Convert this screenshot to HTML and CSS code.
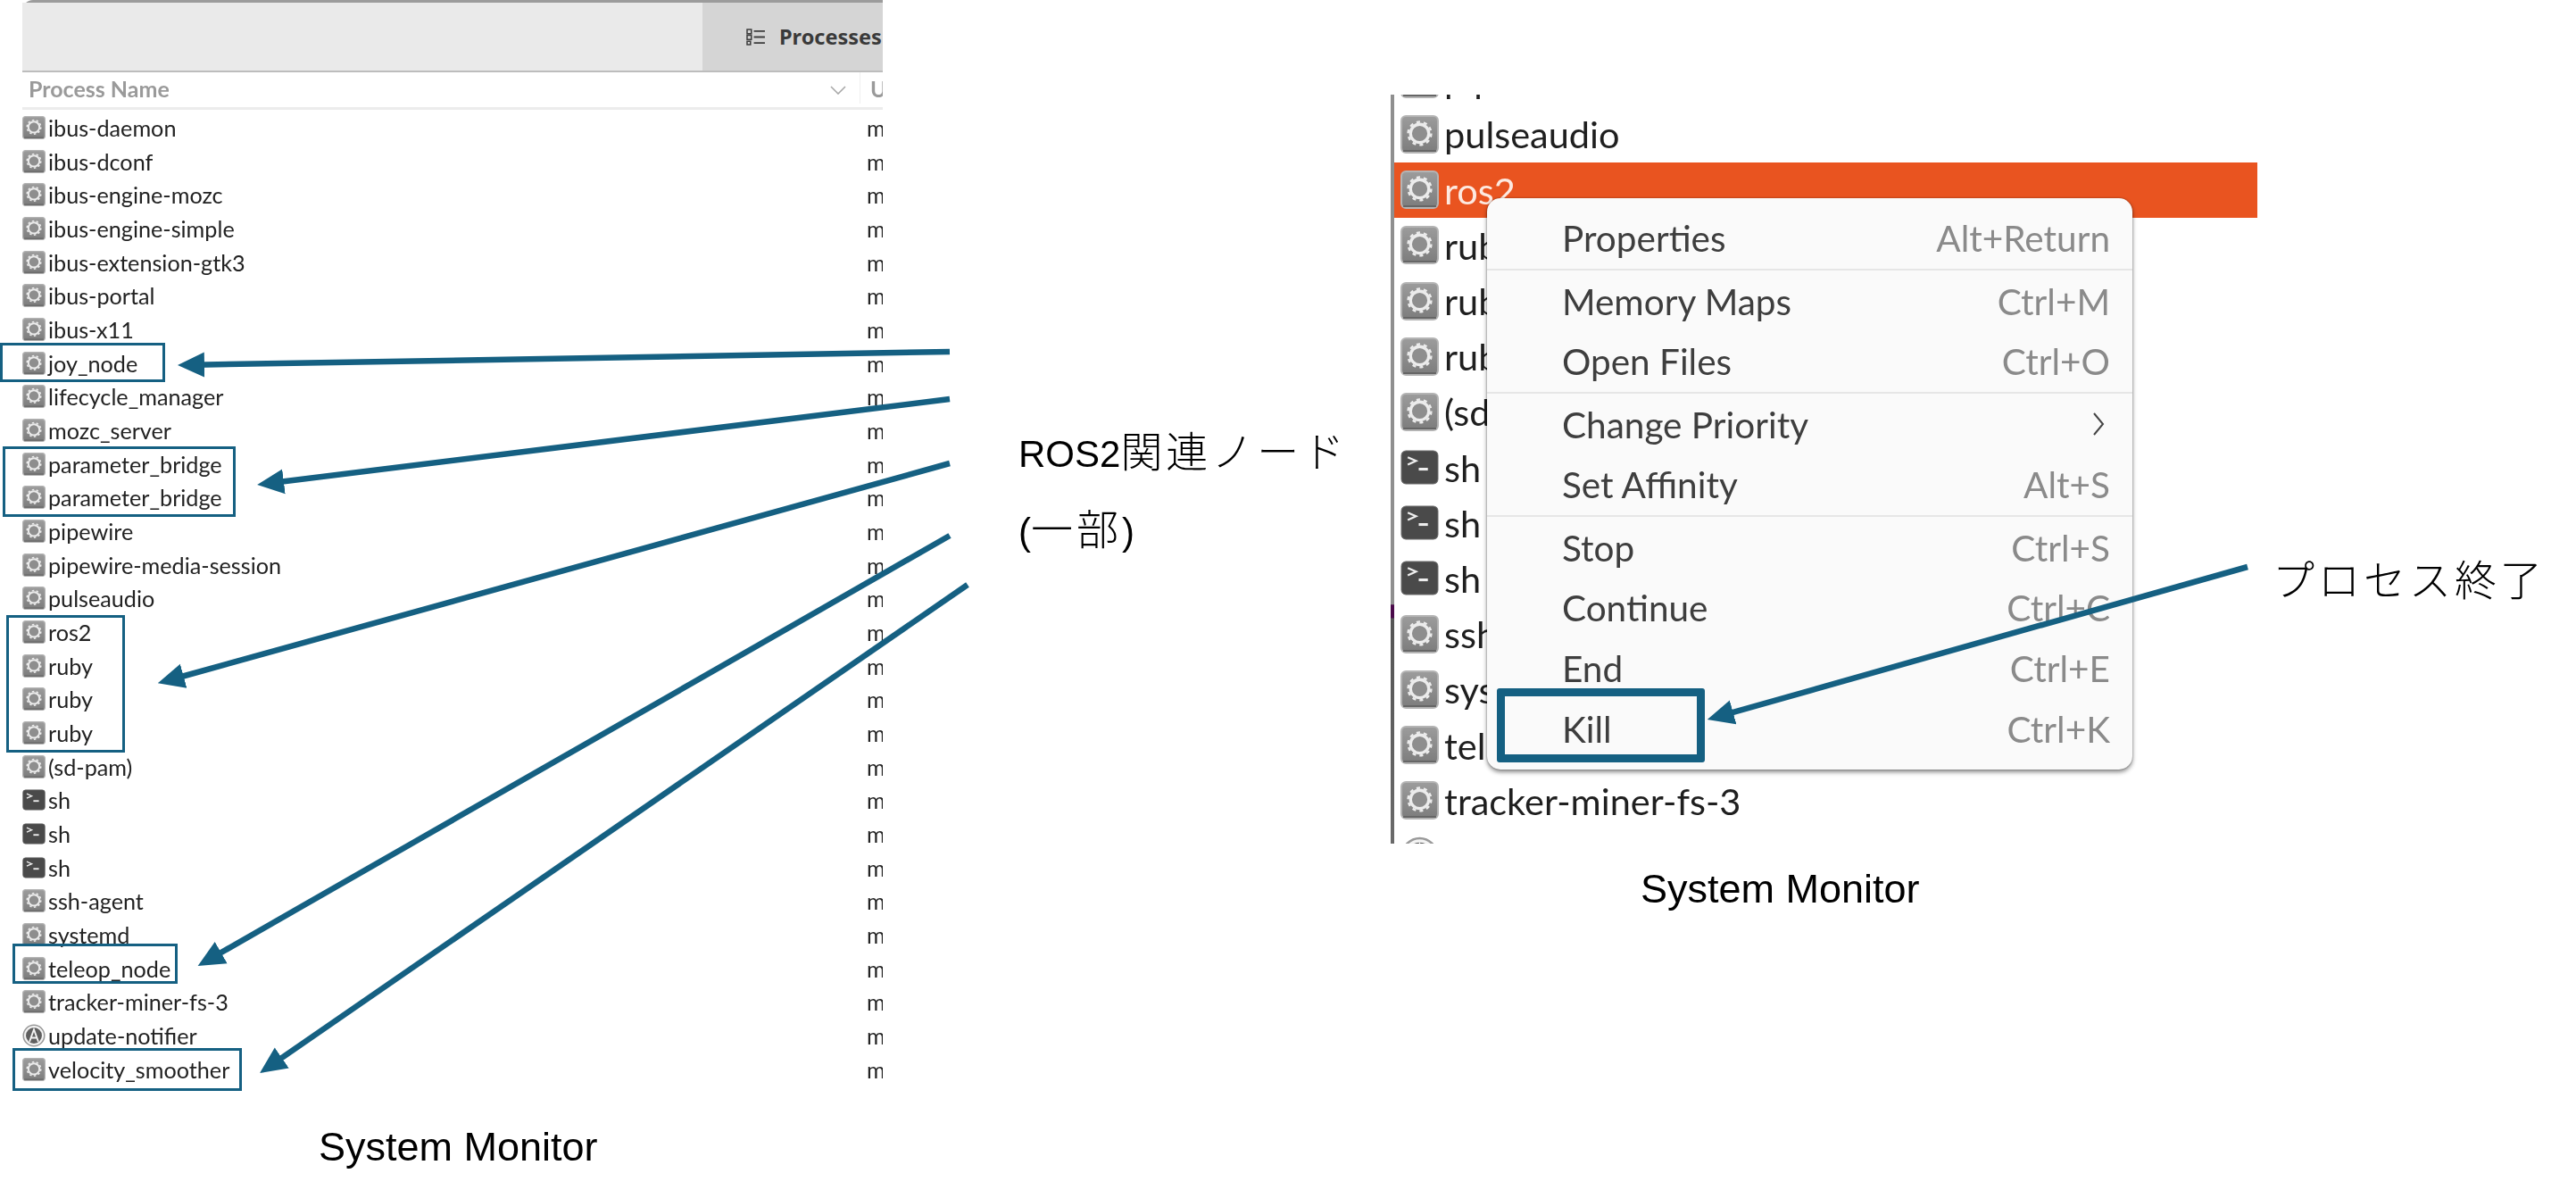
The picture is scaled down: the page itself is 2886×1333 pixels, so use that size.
FILE: index.html
```html
<!DOCTYPE html>
<html lang="ja">
<head>
<meta charset="utf-8">
<title>System Monitor</title>
<link rel="stylesheet" href="styles.css">
</head>
<body>
<svg class="defs" width="0" height="0" aria-hidden="true">
  <defs>
    <linearGradient id="gearBg" x1="0" y1="0" x2="0" y2="1">
      <stop offset="0" stop-color="#9c9c9c"/><stop offset="1" stop-color="#7c7c7c"/>
    </linearGradient>
    <symbol id="gear" viewBox="0 0 42 42">
      <rect x="1" y="1" width="40" height="40" rx="5" fill="url(#gearBg)" stroke="#b4b4b4" stroke-width="2"/>
      <path d="M3 39h36" stroke="#666" stroke-width="2"/>
      <circle cx="21" cy="20" r="10" fill="#8e8e8e" stroke="#ececec" stroke-width="3.2"/>
      <circle cx="21" cy="20" r="12.6" fill="none" stroke="#ececec" stroke-width="2.4" stroke-dasharray="4 3.92"/>
    </symbol>
    <symbol id="term" viewBox="0 0 42 42">
      <rect x="1" y="3" width="40" height="36" rx="5" fill="#4a4a4a" stroke="#6a6a6a" stroke-width="1"/>
      <path d="M8 10l9 4-9 4" fill="none" stroke="#eeeeee" stroke-width="2.2"/>
      <path d="M20 23h10" stroke="#eeeeee" stroke-width="3"/>
    </symbol>
    <symbol id="notifier" viewBox="0 0 42 42">
      <circle cx="21" cy="21" r="19" fill="#f4f4f4" stroke="#9a9a9a" stroke-width="2.5"/>
      <circle cx="21" cy="21" r="14.5" fill="#5f5f5f"/>
      <path d="M13 32L21 10l8 22M15.5 25h11" fill="none" stroke="#f4f4f4" stroke-width="3"/>
    </symbol>
    <marker id="head" markerUnits="userSpaceOnUse" markerWidth="30" markerHeight="30" refX="10" refY="15" orient="auto">
      <path d="M0 1L30 15 0 29z" class="head"/>
    </marker>
  </defs>
</svg>

<main class="slide">
  <section class="shot shot-list">
    <header class="tabs">
      <div class="tab-blank"></div>
      <div class="tab-active">
        <svg class="tab-icon" viewBox="0 0 22 20"><path d="M1 1h5v5H1zM1 8h5v5H1zM1 15h4v4H1z" fill="none" stroke="#3d3d3d" stroke-width="1.6"/><path d="M9 3h13M9 10h13M9 17h13" stroke="#3d3d3d" stroke-width="2"/></svg>
        <span>Processes</span>
      </div>
    </header>
    <div class="col-head">
      <span class="col-name">Process Name</span>
      <svg class="col-sort" viewBox="0 0 18 10"><path d="M1 1l8 8 8-8" fill="none" stroke="#a8a8a8" stroke-width="1.6"/></svg>
      <span class="col-user">U</span>
    </div>
    <ul class="rows">
      <li class="row"><svg class="ico"><use href="#gear"/></svg><span class="name">ibus-daemon</span><span class="user">m</span></li>
      <li class="row"><svg class="ico"><use href="#gear"/></svg><span class="name">ibus-dconf</span><span class="user">m</span></li>
      <li class="row"><svg class="ico"><use href="#gear"/></svg><span class="name">ibus-engine-mozc</span><span class="user">m</span></li>
      <li class="row"><svg class="ico"><use href="#gear"/></svg><span class="name">ibus-engine-simple</span><span class="user">m</span></li>
      <li class="row"><svg class="ico"><use href="#gear"/></svg><span class="name">ibus-extension-gtk3</span><span class="user">m</span></li>
      <li class="row"><svg class="ico"><use href="#gear"/></svg><span class="name">ibus-portal</span><span class="user">m</span></li>
      <li class="row"><svg class="ico"><use href="#gear"/></svg><span class="name">ibus-x11</span><span class="user">m</span></li>
      <li class="row"><svg class="ico"><use href="#gear"/></svg><span class="name">joy_node</span><span class="user">m</span></li>
      <li class="row"><svg class="ico"><use href="#gear"/></svg><span class="name">lifecycle_manager</span><span class="user">m</span></li>
      <li class="row"><svg class="ico"><use href="#gear"/></svg><span class="name">mozc_server</span><span class="user">m</span></li>
      <li class="row"><svg class="ico"><use href="#gear"/></svg><span class="name">parameter_bridge</span><span class="user">m</span></li>
      <li class="row"><svg class="ico"><use href="#gear"/></svg><span class="name">parameter_bridge</span><span class="user">m</span></li>
      <li class="row"><svg class="ico"><use href="#gear"/></svg><span class="name">pipewire</span><span class="user">m</span></li>
      <li class="row"><svg class="ico"><use href="#gear"/></svg><span class="name">pipewire-media-session</span><span class="user">m</span></li>
      <li class="row"><svg class="ico"><use href="#gear"/></svg><span class="name">pulseaudio</span><span class="user">m</span></li>
      <li class="row"><svg class="ico"><use href="#gear"/></svg><span class="name">ros2</span><span class="user">m</span></li>
      <li class="row"><svg class="ico"><use href="#gear"/></svg><span class="name">ruby</span><span class="user">m</span></li>
      <li class="row"><svg class="ico"><use href="#gear"/></svg><span class="name">ruby</span><span class="user">m</span></li>
      <li class="row"><svg class="ico"><use href="#gear"/></svg><span class="name">ruby</span><span class="user">m</span></li>
      <li class="row"><svg class="ico"><use href="#gear"/></svg><span class="name">(sd-pam)</span><span class="user">m</span></li>
      <li class="row"><svg class="ico"><use href="#term"/></svg><span class="name">sh</span><span class="user">m</span></li>
      <li class="row"><svg class="ico"><use href="#term"/></svg><span class="name">sh</span><span class="user">m</span></li>
      <li class="row"><svg class="ico"><use href="#term"/></svg><span class="name">sh</span><span class="user">m</span></li>
      <li class="row"><svg class="ico"><use href="#gear"/></svg><span class="name">ssh-agent</span><span class="user">m</span></li>
      <li class="row"><svg class="ico"><use href="#gear"/></svg><span class="name">systemd</span><span class="user">m</span></li>
      <li class="row"><svg class="ico"><use href="#gear"/></svg><span class="name">teleop_node</span><span class="user">m</span></li>
      <li class="row"><svg class="ico"><use href="#gear"/></svg><span class="name">tracker-miner-fs-3</span><span class="user">m</span></li>
      <li class="row"><svg class="ico"><use href="#notifier"/></svg><span class="name">update-notifier</span><span class="user">m</span></li>
      <li class="row"><svg class="ico"><use href="#gear"/></svg><span class="name">velocity_smoother</span><span class="user">m</span></li>
    </ul>
  </section>

  <section class="shot shot-menu">
    <ul class="big-rows">
      <li class="big-row"><svg class="big-ico"><use href="#gear"/></svg><span>pipewire-media-session</span></li>
      <li class="big-row"><svg class="big-ico"><use href="#gear"/></svg><span>pulseaudio</span></li>
      <li class="big-row is-selected"><svg class="big-ico"><use href="#gear"/></svg><span>ros2</span></li>
      <li class="big-row"><svg class="big-ico"><use href="#gear"/></svg><span>ruby</span></li>
      <li class="big-row"><svg class="big-ico"><use href="#gear"/></svg><span>ruby</span></li>
      <li class="big-row"><svg class="big-ico"><use href="#gear"/></svg><span>ruby</span></li>
      <li class="big-row"><svg class="big-ico"><use href="#gear"/></svg><span>(sd-pam)</span></li>
      <li class="big-row"><svg class="big-ico"><use href="#term"/></svg><span>sh</span></li>
      <li class="big-row"><svg class="big-ico"><use href="#term"/></svg><span>sh</span></li>
      <li class="big-row"><svg class="big-ico"><use href="#term"/></svg><span>sh</span></li>
      <li class="big-row"><svg class="big-ico"><use href="#gear"/></svg><span>ssh-agent</span></li>
      <li class="big-row"><svg class="big-ico"><use href="#gear"/></svg><span>systemd</span></li>
      <li class="big-row"><svg class="big-ico"><use href="#gear"/></svg><span>teleop_node</span></li>
      <li class="big-row"><svg class="big-ico"><use href="#gear"/></svg><span>tracker-miner-fs-3</span></li>
      <li class="big-row"><svg class="big-ico"><use href="#notifier"/></svg><span>update-notifier</span></li>
    </ul>
    <div class="menu">
      <div class="item"><span>Properties</span><span class="key">Alt+Return</span></div>
      <div class="sep"></div>
      <div class="item"><span>Memory Maps</span><span class="key">Ctrl+M</span></div>
      <div class="item"><span>Open Files</span><span class="key">Ctrl+O</span></div>
      <div class="sep"></div>
      <div class="item"><span>Change Priority</span><svg class="sub" viewBox="0 0 14 26"><path d="M2 1l10 12L2 25" fill="none" stroke="#444" stroke-width="2"/></svg></div>
      <div class="item"><span>Set Affinity</span><span class="key">Alt+S</span></div>
      <div class="sep"></div>
      <div class="item"><span>Stop</span><span class="key">Ctrl+S</span></div>
      <div class="item"><span>Continue</span><span class="key">Ctrl+C</span></div>
      <div class="item"><span>End</span><span class="key">Ctrl+E</span></div>
      <div class="item"><span>Kill</span><span class="key">Ctrl+K</span></div>
    </div>
  </section>

  <div class="box box-joy"></div>
  <div class="box box-param"></div>
  <div class="box box-ros"></div>
  <div class="box box-teleop"></div>
  <div class="box box-velocity"></div>
  <div class="box box-kill"></div>

  <svg class="arrows" viewBox="0 0 2886 1333">
    <line x1="1064" y1="394" x2="219" y2="408.7"/>
    <line x1="1064" y1="447" x2="308" y2="540.5"/>
    <line x1="1064" y1="519" x2="196" y2="760"/>
    <line x1="1064" y1="600" x2="239" y2="1072"/>
    <line x1="1084" y1="655" x2="307.5" y2="1190.6"/>
    <line x1="2518" y1="635" x2="1932" y2="800.6"/>
  </svg>

  <p class="note note-ros">ROS2<span class="jp">関連ノード</span></p>
  <p class="note note-part">(<span class="jp">一部</span>)</p>
  <p class="note note-kill"><span class="jp">プロセス終了</span></p>
  <p class="caption caption-left">System Monitor</p>
  <p class="caption caption-right">System Monitor</p>
</main>
</body>
</html>
```
FILE: styles.css
```css
* { box-sizing: border-box; }
html, body { margin: 0; padding: 0; background: #fff; }
.defs { position: absolute; }

.slide {
  position: relative;
  width: 2886px;
  height: 1333px;
  overflow: hidden;
  background: #fff;
  font-family: "Liberation Sans", "Noto Sans CJK JP", sans-serif;
}

/* left screenshot */
.shot { position: absolute; overflow: hidden; }
.shot-list {
  left: 25px; top: 0; width: 964px; height: 1222px;
  font-family: "Lato", "Noto Sans", sans-serif;
  color: #222;
  filter: blur(0.45px);
}
.tabs {
  display: flex;
  height: 81px;
  border-top: 3px solid #9c9c9c;
  border-bottom: 2px solid #bdbdbd;
  border-top-left-radius: 12px;
}
.tab-blank { width: 762px; background: #eaeaea; }
.tab-active {
  flex: 1;
  display: flex;
  align-items: center;
  gap: 16px;
  padding-left: 49px;
  background: #d5d5d5;
  font-family: "Noto Sans", sans-serif;
  font-weight: 700;
  font-size: 23.5px;
  color: #3a3a3a;
  white-space: nowrap;
}
.tab-icon { width: 21px; height: 19px; flex: none; }
.col-head {
  position: relative;
  display: flex;
  align-items: center;
  height: 42px;
  padding-bottom: 4px;
  border-bottom: 3px solid #ececec;
  font-weight: 700;
  font-size: 25px;
  color: #9a9a9a;
}
.col-name { margin-left: 7px; }
.col-sort { position: absolute; left: 905px; top: 15px; width: 18px; height: 10px; }
.col-user {
  position: absolute; left: 938px; top: 0; bottom: 4px;
  padding-left: 11px;
  border-left: 1px solid #f0f0f0;
  display: flex; align-items: center;
}
.rows { list-style: none; margin: 0; padding: 1px 0 0; }
.row {
  display: flex;
  align-items: center;
  height: 37.68px;
  font-size: 25.2px;
  white-space: nowrap;
}
.ico { width: 26px; height: 26px; flex: none; margin-right: 3px; }
.name { width: 917px; flex: none; }
.user { flex: none; }

/* right screenshot */
.shot-menu {
  left: 1558px; top: 106px; width: 971px; height: 839px;
  border-left: 4px solid;
  border-image: linear-gradient(to bottom, #8f8f8f 0, #8f8f8f 68%, #4a0a4a 68.1%, #4a0a4a 69.8%, #555 69.9%, #6a6a6a 100%) 1;
  font-family: "Lato", "Noto Sans", sans-serif;
  color: #1f1f1f;
  filter: blur(0.6px);
}
.big-rows { list-style: none; margin: -48.8px 0 0; padding: 0; }
.big-row {
  display: flex;
  align-items: center;
  gap: 6px;
  height: 62.2px;
  padding-left: 7px;
  font-size: 41.5px;
  white-space: nowrap;
}
.big-ico { width: 43px; height: 43px; flex: none; }
.is-selected { background: #e95420; color: #fde9e0; }

.menu {
  position: absolute;
  left: 104px; top: 116px;
  width: 723px;
  padding: 11.2px 0 12px;
  background: #fafafa;
  border-radius: 15px;
  box-shadow: 0 3px 5px rgba(0,0,0,.45), 0 0 2px rgba(0,0,0,.4);
  font-size: 40.5px;
  color: #3e3e3e;
}
.item {
  display: flex;
  align-items: center;
  justify-content: space-between;
  height: 67.6px;
  padding: 0 25px 0 84px;
}
.key { color: #8a8a8a; }
.sep { height: 2px; margin: 0.4px 0; background: #e6e6e6; }
.sub { width: 14px; height: 26px; margin-right: 6px; }

/* callouts */
.box { position: absolute; border: 3px solid #156082; }
.box-joy { left: 0; top: 384px; width: 185px; height: 44px; }
.box-param { left: 3px; top: 500px; width: 261px; height: 79px; }
.box-ros { left: 7px; top: 689px; width: 133px; height: 154px; }
.box-teleop { left: 14px; top: 1057px; width: 185px; height: 45px; }
.box-velocity { left: 14px; top: 1174px; width: 257px; height: 48px; }
.box-kill { left: 1677px; top: 771px; width: 233px; height: 83px; border-width: 9px; border-radius: 3px; }

.arrows { position: absolute; inset: 0; width: 2886px; height: 1333px; pointer-events: none; }
.arrows line { stroke: #156082; stroke-width: 6.5; marker-end: url(#head); }
.head { fill: #156082; }

.note, .caption { position: absolute; margin: 0; color: #000; white-space: nowrap; line-height: 1; }
.note { font-size: 42px; }
.jp { font-family: "Noto Sans CJK JP", sans-serif; font-size: 47px; letter-spacing: 4px; font-weight: 300; }
.note-ros { left: 1141px; top: 479px; }
.note-part { left: 1141px; top: 566px; }
.note-kill { left: 2546px; top: 623px; }
.caption { font-size: 45px; }
.caption-left { left: 357px; top: 1262px; }
.caption-right { left: 1838px; top: 973px; }
```
